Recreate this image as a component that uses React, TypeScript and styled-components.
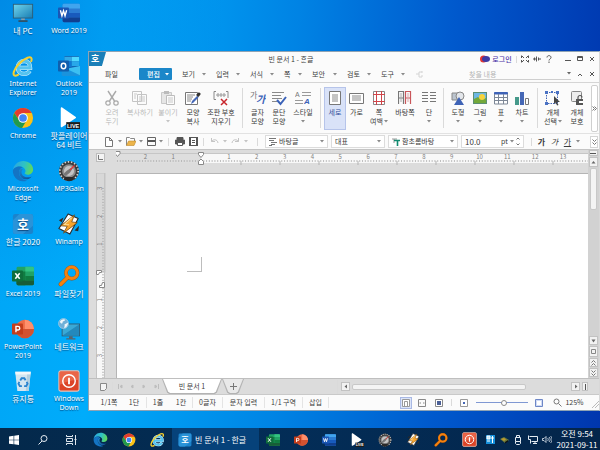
import React from "react";
import styled, { createGlobalStyle, css } from "styled-components";

const GlobalStyle = createGlobalStyle`
  * { box-sizing: border-box; }
  body { margin: 0; font-family: "Noto Sans CJK KR", "Noto Sans", sans-serif; font-size: 7px; color: #3c3c3c; }
  button, input, select { font: inherit; color: inherit; margin: 0; padding: 0; border: 0; background: none; border-radius: 0; outline: 0; }
  svg { display: block; flex: none; }
`;

/* ---------- application icons (24 x 24 grid) ---------- */

type IconProps = { size?: number };
const Art = ({ size = 22, children }: IconProps & { children: React.ReactNode }) => (
  <svg width={size} height={size} viewBox="0 0 24 24" fill="none" aria-hidden="true">{children}</svg>
);

const PcIcon = (p: IconProps) => (
  <Art {...p}>
    <defs><linearGradient id="pc" x1="0" y1="0" x2="1" y2="1"><stop stopColor="#6fd3ec" /><stop offset="1" stopColor="#1a7fb4" /></linearGradient></defs>
    <rect x="1" y="2" width="22" height="16" fill="#2b5d78" /><rect x="2" y="3" width="20" height="14" fill="url(#pc)" />
    <path d="M10 18h4v2h-4z" fill="#8a9ba6" /><path d="M7 20h10v1.6H7z" fill="#39444c" />
  </Art>
);
const NetworkIcon = (p: IconProps) => (
  <Art {...p}>
    <rect x="4" y="6" width="20" height="14" fill="#2b5d78" /><rect x="5" y="7" width="18" height="12" fill="#3aa9d6" />
    <path d="M5 19L23 7v12z" fill="#2389bc" />
    <path d="M12 20h4v2h-4zM9 22h10v1.5H9z" fill="#56646e" />
    <circle cx="6" cy="6" r="5.6" fill="#6fb0d8" /><path d="M2 4c2-3 5-3 6-2-1 2-3 1-3 3S3 6 2 4zM7 7l4-2c0 3-2 6-4 6-1-1 1-2 0-4z" fill="#eff8fc" />
    <circle cx="6" cy="6" r="5.4" stroke="#a8d2ea" strokeWidth=".7" />
  </Art>
);
const WordIcon = (p: IconProps) => (
  <Art {...p}>
    <rect x="5" y="2" width="19" height="20" rx="1.5" fill="#2b7cd3" /><path d="M6.500 2h16A1.500 1.500 0 0 1 24 3.500V7H5V3.500A1.500 1.500 0 0 1 6.500 2z" fill="#41a5ee" />
    <path d="M5 12h19v5H5z" fill="#185abd" /><path d="M5 17h19v3.500a1.500 1.500 0 0 1-1.500 1.500h-16A1.500 1.500 0 0 1 5 20.500z" fill="#103f91" />
    <rect x="0" y="6" width="12" height="12" rx="1" fill="#1a56b5" /><path d="M2.600 9l1.700 6 1.700-5.500L7.700 15l1.700-6" stroke="#fff" strokeWidth="1.500" />
  </Art>
);
const OutlookIcon = (p: IconProps) => (
  <Art {...p}>
    <rect x="7" y="1" width="16" height="15" rx="1" fill="#1066b5" /><path d="M7 2h8v5H7z" fill="#32a9e7" /><path d="M15 2h8v5h-8z" fill="#50d9ff" /><path d="M7 7h8v6H7z" fill="#0f78d4" /><path d="M15 7h8v5h-8z" fill="#28a8ea" />
    <path d="M4 12l10 6 10-6v9.500a1.500 1.500 0 0 1-1.500 1.500h-17A1.500 1.500 0 0 1 4 21.500z" fill="#1a93dd" /><path d="M24 12v10L9 15z" fill="#3cc0f2" />
    <rect x="0" y="6" width="12" height="12" rx="1" fill="#0f5fae" /><ellipse cx="6" cy="12" rx="2.500" ry="3" stroke="#fff" strokeWidth="1.600" />
  </Art>
);
const ExcelIcon = (p: IconProps) => (
  <Art {...p}>
    <rect x="5" y="2" width="19" height="20" rx="1.500" fill="#21a366" /><path d="M14.500 2h8A1.500 1.500 0 0 1 24 3.500V7h-9.500z" fill="#33c481" /><path d="M5 7h9.500v5H5zM5 12h9.500v10h-8A1.500 1.500 0 0 1 5 20.500z" fill="#107c41" /><path d="M14.500 12H24v5h-9.500z" fill="#107c41" /><path d="M5 17h19v3.500a1.500 1.500 0 0 1-1.500 1.500h-16A1.500 1.500 0 0 1 5 20.500z" fill="#185c37" />
    <rect x="0" y="6" width="12" height="12" rx="1" fill="#0f6e3b" /><path d="M3.600 9l4.800 6M8.400 9l-4.800 6" stroke="#fff" strokeWidth="1.700" />
  </Art>
);
const PowerPointIcon = (p: IconProps) => (
  <Art {...p}>
    <circle cx="14" cy="12" r="10" fill="#ed6c47" /><path d="M14 2a10 10 0 0 1 10 10H14z" fill="#ff8f6b" /><path d="M4 12h20a10 10 0 0 1-20 0z" fill="#d35230" />
    <rect x="0" y="6" width="12" height="12" rx="1" fill="#c43e1c" /><path d="M4.300 15.500V9.200h2.200a1.900 1.900 0 0 1 0 3.900H4.300" stroke="#fff" strokeWidth="1.500" />
  </Art>
);
const IeIcon = (p: IconProps) => (
  <Art {...p}>
    <path d="M7 14h12.800c.2-4.600-2.600-7.300-6.500-7.300-4 0-7 2.900-7 7s2.900 6.900 7 6.900c2.600 0 4.700-1.100 6-3.300" stroke="#d4f2fd" strokeWidth="4.600" />
    <path d="M7 14h12.800c.2-4.600-2.600-7.300-6.500-7.300-4 0-7 2.900-7 7s2.900 6.900 7 6.900c2.600 0 4.700-1.100 6-3.300" stroke="#55c3ef" strokeWidth="3.400" />
    <path d="M21 6.800c1.200-3.600-.4-5.100-4-3.800C10.500 5.400 3.500 13 1.900 18.700c-.9 3.600 1 4.900 4.600 3" stroke="#f6cf2f" strokeWidth="2.200" strokeLinecap="round" />
  </Art>
);
const ChromeIcon = (p: IconProps) => (
  <Art {...p}>
    <circle cx="12" cy="12" r="11" fill="#fbc116" />
    <path d="M2.500 6.500A11 11 0 0 1 21.500 6.500H12L8 14.500z" fill="#e33b2e" />
    <path d="M2.500 6.500A11 11 0 0 0 11 23l5-8.500-8 .2z" fill="#219a4d" />
    <circle cx="12" cy="12" r="5.300" fill="#fff" /><circle cx="12" cy="12" r="4.200" fill="#4285f4" />
  </Art>
);
const EdgeIcon = (p: IconProps) => (
  <Art {...p}>
    <defs>
      <linearGradient id="edgeTop" x1="0" y1=".3" x2="1" y2=".5"><stop stopColor="#2ba5e3" /><stop offset=".55" stopColor="#2fc3c3" /><stop offset="1" stopColor="#62d957" /></linearGradient>
      <linearGradient id="edgeLow" x1="0" y1="0" x2="1" y2="1"><stop stopColor="#1b8ad6" /><stop offset="1" stopColor="#114a8b" /></linearGradient>
    </defs>
    <path d="M1 11.500C1.500 5.500 6.300 1 12.200 1 18.500 1 23 5.300 23 10.300c0 3.500-2.700 5.700-5.700 5.700-2.500 0-3.900-.8-3.600-1.700.9-1 1.200-2 .9-3.200-.7-2.500-3.300-4-6.100-4-4 0-7 2-7.500 4.400z" fill="url(#edgeTop)" />
    <path d="M1 11.500C1.500 9 4.500 7.100 8.500 7.100c1.200 0 2.300.3 3.300.8-3 .9-4.500 3.600-4.100 6.700.5 4.300 4.400 7.300 8.800 7.700A11 11 0 0 1 1 11.500z" fill="#1474c4" />
    <path d="M9.500 9.300c-2.600 2.300-2.300 6.600.4 9.400 3.500 3.500 8.600 3 11.600-.8-3.500 1.900-9.500 1.200-10.900-3-.5-1.700-.2-3.700 1.200-4.900z" fill="url(#edgeLow)" />
  </Art>
);
const HwpIcon = (p: IconProps) => (
  <Art {...p}>
    <rect x="1" y="1" width="22" height="22" rx="2.500" fill="#1b83cc" /><path d="M1 8L8 1h12.500A2.500 2.500 0 0 1 23 3.500V14L12 23H3.500A2.500 2.500 0 0 1 1 20.500z" fill="#2a93d8" />
    <text x="12" y="17" textAnchor="middle" fontSize="14" fontWeight="700" fill="#fff">호</text>
  </Art>
);
const PotPlayerIcon = (p: IconProps) => (
  <Art {...p}>
    <path d="M3 1.500c0-1 .8-1.400 1.600-.9l14.500 9.900c.8.500.8 1.300 0 1.800L4.600 21.800c-.8.500-1.600 0-1.600-.9z" fill="#fff" />
    <rect x="9" y="16.500" width="15" height="7.500" fill="#1c1c1c" />
    <text x="16.500" y="22.400" textAnchor="middle" fontFamily="Liberation Sans, sans-serif" fontSize="6" fontWeight="700" fill="#fff">LIVE</text>
  </Art>
);
const Mp3GainIcon = (p: IconProps) => (
  <Art {...p}>
    <circle cx="12" cy="12" r="11" fill="#3b3b3b" /><circle cx="12" cy="12" r="10" stroke="#d6d6d6" strokeWidth="1.800" strokeDasharray="1.500 2" />
    <circle cx="12" cy="12" r="7.500" fill="#8d8d8d" /><circle cx="12" cy="12" r="5.500" fill="#c4c4c4" /><path d="M6 15.500c3-4 5-5 11-8.500-3 6-5 8.500-9 10z" fill="#777" /><path d="M13 11l5-5" stroke="#e33" strokeWidth="1.300" />
    <path d="M6 21a10 10 0 0 0 12 0l-2-2.500H8z" fill="#2a2a2a" />
  </Art>
);
const WinampIcon = (p: IconProps) => (
  <Art {...p}>
    <path d="M11 1l11 5-9 17-12-6z" fill="#fff" stroke="#2a2a2a" strokeWidth="1.200" strokeLinejoin="round" />
    <path d="M1 8l5-3-2 5zM18 19l5-5-1 6z" fill="#2a2a2a" />
    <path d="M18 2L3 14l7 .5L6 22l15-11.500-6-.8z" fill="#f7a32b" stroke="#6b430e" strokeWidth=".8" strokeLinejoin="round" />
    <path d="M15 5L7 12.500l5 .3" stroke="#ffe09a" strokeWidth="1.200" />
  </Art>
);
const FinderIcon = (p: IconProps) => (
  <Art {...p}>
    <circle cx="15" cy="8.500" r="6.300" stroke="#a34d06" strokeWidth="4" /><path d="M10.500 13.500L3 21" stroke="#a34d06" strokeWidth="4.600" strokeLinecap="round" />
    <circle cx="15" cy="8.500" r="6.300" stroke="#f5820f" strokeWidth="3.200" /><path d="M10.500 13.500L3 21" stroke="#f5820f" strokeWidth="3.600" strokeLinecap="round" />
  </Art>
);
const RecycleIcon = (p: IconProps) => (
  <Art {...p}>
    <path d="M3.500 2h17l-2.300 21H5.800z" fill="#d3e6f1" /><path d="M3.500 2h17l-.4 3H3.900z" fill="#f1f7fa" /><path d="M16.500 5h3.600l-1.900 18H15z" fill="#b5d0e0" />
    <path d="M9 11.500l1.500-2.500h3l1.300 2.200M16 13l1 2-1.500 2.500h-2.300M10.800 17.500H8.500L7 15l1-2" stroke="#2b84cf" strokeWidth="2" />
  </Art>
);
const PowerIcon = (p: IconProps) => (
  <Art {...p}>
    <rect x="1" y="1" width="22" height="22" rx="2" fill="#dc4427" stroke="#eec0b2" strokeWidth="1.200" />
    <path d="M2 2h20v9C15 11 8 13 2 16z" fill="#e96548" /><circle cx="12" cy="12" r="6.800" stroke="#fff" strokeWidth="1.600" /><path d="M12 8.500v7" stroke="#fff" strokeWidth="2" />
  </Art>
);

/* ---------- small drawings ---------- */

const Line = ({ w, h, d, color = "#555", sw = 1, fill = "none" }: { w: number; h: number; d: string; color?: string; sw?: number; fill?: string }) => (
  <svg width={w} height={h} viewBox={`0 0 ${w} ${h}`} fill={fill} stroke={color} strokeWidth={sw} aria-hidden="true"><path d={d} /></svg>
);
const Caret = ({ color = "#8a8a8a" }: { color?: string }) => (
  <svg width="4" height="3" viewBox="0 0 4 3" aria-hidden="true"><path d="M0 0h4L2 2.500z" fill={color} /></svg>
);

/* ---------- desktop ---------- */

const Desktop = styled.div`
  height: 100vh;
  display: flex;
  flex-direction: column;
  background:
    radial-gradient(ellipse 50% 90% at 0 0, rgba(0, 112, 214, 0.5), transparent 75%),
    linear-gradient(93deg, #00a6f6 0, #00acfb 17%, #0083e4 48%, #0059cd 73%, #0036ae 100%);
`;
const Workspace = styled.main`
  flex: 1;
  min-height: 0;
  display: flex;
`;
const Shortcuts = styled.nav`
  width: 88px;
  padding: 2px 0 5px;
  display: grid;
  grid-template-columns: 46px 46px;
  grid-template-rows: repeat(8, 1fr);
  grid-auto-flow: column;
  flex: none;
`;
const Shortcut = styled.button<{ $latin: boolean }>`
  display: flex;
  flex-direction: column;
  align-items: center;
  justify-content: flex-start;
  gap: 2px;
  min-height: 0;
  color: #fff;
  font-family: ${(p) => (p.$latin ? '"Noto Sans", sans-serif' : '"Noto Sans CJK KR", sans-serif')};
  font-size: ${(p) => (p.$latin ? 7 : 8)}px;
  line-height: 9px;
  text-align: center;
  white-space: pre;
  text-shadow: 0 1px 1px rgba(0, 40, 90, 0.7);
`;

const shortcuts: [string, React.ComponentType<IconProps>][] = [
  ["내 PC", PcIcon], ["Internet\nExplorer", IeIcon], ["Chrome", ChromeIcon], ["Microsoft\nEdge", EdgeIcon],
  ["한글 2020", HwpIcon], ["Excel 2019", ExcelIcon], ["PowerPoint\n2019", PowerPointIcon], ["휴지통", RecycleIcon],
  ["Word 2019", WordIcon], ["Outlook\n2019", OutlookIcon], ["팟플레이어\n64 비트", PotPlayerIcon], ["MP3Gain", Mp3GainIcon],
  ["Winamp", WinampIcon], ["파일찾기", FinderIcon], ["네트워크", NetworkIcon], ["Windows\nDown", PowerIcon],
];

/* ---------- window frame ---------- */

const Window = styled.section`
  flex: 1;
  min-width: 0;
  margin: 51px 0 17px;
  display: flex;
  flex-direction: column;
  background: #fbfbfb;
  border: 1px solid #8fa3b4;
  border-right-color: #d8d8d8;
`;
const TitleBar = styled.header`
  height: 14px;
  flex: none;
  display: grid;
  grid-template-columns: 120px 1fr 120px;
  align-items: center;
`;
const Badge = styled.div`
  width: 17px;
  height: 14px;
  padding-left: 2px;
  background: #1b7fb8;
  clip-path: polygon(0 0, 100% 0, 76% 100%, 0 100%);
  color: #fff;
  font-size: 9px;
  font-weight: 700;
  line-height: 13px;
`;
const Title = styled.h1`
  margin: 0;
  padding-right: 106px;
  font-size: 7px;
  font-weight: 400;
  text-align: center;
  line-height: 14px;
  white-space: nowrap;
`;
const WindowTools = styled.div`
  display: flex;
  align-items: center;
  justify-content: flex-end;
  padding-right: 1px;
`;
const Tool = styled.button<{ $w?: number }>`
  width: ${(p) => p.$w ?? 12}px;
  height: 12px;
  flex: none;
  display: flex;
  align-items: center;
  justify-content: center;
  gap: 2px;
  line-height: 12px;
  white-space: nowrap;
`;
const Login = styled(Tool)`
  gap: 2px;
  color: #4d35a8;
  font-weight: 500;
`;

const MenuBar = styled.nav`
  height: 17px;
  flex: none;
  display: flex;
  align-items: center;
  padding: 0 1px 0 10px;
  border-bottom: 1px solid #d5d5d5;
`;
const MenuItem = styled.button<{ $w: number; $active?: boolean }>`
  width: ${(p) => p.$w}px;
  height: 12px;
  flex: none;
  display: flex;
  align-items: center;
  justify-content: space-between;
  padding: 0 4px 0 6px;
  line-height: 12px;
  white-space: nowrap;
  ${(p) => p.$active && css`background: #1b87c9; color: #fff; font-weight: 500; border-radius: 1px; padding: 0 3px 0 8px;`}
`;
const SearchBox = styled.div`
  width: 102px;
  height: 12px;
  margin: 0 3px 0 auto;
  display: flex;
  align-items: center;
  border-bottom: 1px solid #cfcfcf;
  input { flex: 1; min-width: 0; height: 10px; line-height: 10px; }
  input::placeholder { color: #b4b4b4; opacity: 1; }
`;

/* ---------- ribbon ---------- */

const Ribbon = styled.div`
  height: 51px;
  flex: none;
  display: flex;
  align-items: center;
  padding: 0 1px 0 9px;
  border-bottom: 1px solid #e2e2e2;
`;
const RibbonButton = styled.button<{ $w: number; $on?: boolean; $off?: boolean }>`
  width: ${(p) => p.$w}px;
  height: 43px;
  flex: none;
  display: flex;
  flex-direction: column;
  align-items: center;
  padding-top: 2px;
  gap: 2px;
  line-height: 9px;
  white-space: pre;
  border: 1px solid ${(p) => (p.$on ? "#b6c4ea" : "transparent")};
  background: ${(p) => (p.$on ? "#d9e2f8" : "none")};
  color: ${(p) => (p.$off ? "#b9b9b9" : p.$on ? "#33519c" : "#3c3c3c")};
`;
const RibbonLabel = styled.span`
  display: flex;
  flex-direction: column;
  align-items: center;
`;
const CaretRow = styled.span`
  height: 9px;
  display: flex;
  align-items: center;
  gap: 1px;
`;
const Divider = styled.i<{ $w?: number; $h?: number }>`
  width: ${(p) => p.$w ?? 8}px;
  height: ${(p) => p.$h ?? 40}px;
  flex: none;
  background: linear-gradient(#dadada, #dadada) center / 1px 100% no-repeat;
`;
const MoreButton = styled.button`
  width: 7px;
  height: 47px;
  margin-left: auto;
  display: flex;
  align-items: center;
  justify-content: center;
  border: 1px solid #cfcfcf;
  border-radius: 2px;
  background: #fff;
`;

const G = ({ children, w = 16 }: { children: React.ReactNode; w?: number }) => (
  <svg width={w} height="16" viewBox={`0 0 ${w} 16`} fill="none" aria-hidden="true">{children}</svg>
);

type RibbonItem = { w: number; label?: string; second?: string; caret?: boolean; on?: boolean; off?: boolean; icon?: React.ReactNode };
const ribbon: RibbonItem[] = [
  { w: 28, label: "오려\n두기", off: true, icon: <G><path d="M4 1l6.500 10M12 1L5.500 11" stroke="#a9a9a9" strokeWidth="1.400" /><circle cx="4" cy="13" r="2.200" stroke="#a9a9a9" strokeWidth="1.200" /><circle cx="12" cy="13" r="2.200" stroke="#a9a9a9" strokeWidth="1.200" /></G> },
  { w: 28, label: "복사하기", off: true, icon: <G><path d="M.5 1.500h9v10h-9zM5.500 4.500h9v10h-9z" fill="#fbfbfb" stroke="#c4c4c4" /><path d="M7 7h6M7 9h6M7 11h6M2 4h3M2 6h2M2 8h2" stroke="#c9c9c9" /></G> },
  { w: 28, label: "붙이기", caret: true, off: true, icon: <G><path d="M1.500 2.500h10v11h-10z" fill="#e6e6e6" stroke="#c9c9c9" /><path d="M4 1h5v3H4z" fill="#bbb" /><path d="M6.500 5.500h8v9h-8z" fill="#fbfbfb" stroke="#bdbdbd" /><path d="M8 8h5M8 10h5M8 12h5" stroke="#c9c9c9" /></G> },
  { w: 22, label: "모양\n복사", icon: <G><path d="M.5 2.500h12v12H.5z" fill="#fff" stroke="#777" /><path d="M2 5h8M2 7h6M2 9h5M2 11h4" stroke="#8a8a8a" /><path d="M6 14l1-3 5-5 1.500 1.500-5 5z" fill="#4568b8" /><path d="M11 5l2-2c1-1 3 0 2.500 1.500l-2 2.500z" fill="#333" /></G> },
  { w: 34, label: "조판 부호\n지우기", icon: <G w={18}><path d="M4 1.500H2v8h2M14 1.500h2V8" stroke="#8a8a8a" /><path d="M4 5h10M6 3v4M9 3v4M12 3v4" stroke="#9a9a9a" /><path d="M9 9l6 6M15 9l-6 6" stroke="#c8262c" strokeWidth="1.500" /></G> },
  { w: 9 },
  { w: 21, label: "글자\n모양", icon: <G><text x="0" y="8" fontSize="8" fill="#777">가</text><text x="6" y="13" fontSize="10" fontStyle="italic" fontWeight="700" fill="#3a62b8">가</text></G> },
  { w: 22, label: "문단\n모양", icon: <G><path d="M1 2.500h12M1 5.500h9M1 8.500h10M1 11.500h5" stroke="#8a8a8a" strokeWidth="1.200" /><path d="M6 10l3.500 4L15 7" stroke="#3a62b8" strokeWidth="2" /></G> },
  { w: 26, label: "스타일", caret: true, icon: <G><text x="0" y="7" fontFamily="Liberation Sans, sans-serif" fontSize="7" fill="#777">A</text><path d="M7 2.500h9M7 5.500h9M0 10.500h8M0 13.500h8" stroke="#9a9a9a" /><text x="9" y="14" fontFamily="Liberation Sans, sans-serif" fontSize="8" fontWeight="700" fontStyle="italic" fill="#3a62b8">A</text></G> },
  { w: 8 },
  { w: 22, label: "세로", on: true, icon: <G w={12}><path d="M.5 1.500h11v13H.5z" fill="#fff" stroke="#777" /><path d="M3 5h6M3 7h6M3 9h6M3 11h6" stroke="#8a8a8a" /></G> },
  { w: 21, label: "가로", icon: <G><path d="M.5 3.500h14v10H.5z" fill="#fff" stroke="#777" /><path d="M3 6h9M3 8h9M3 10h9" stroke="#8a8a8a" /></G> },
  { w: 24, label: "쪽", second: "여백", icon: <G w={14}><path d="M1.500 1.500h11v13h-11z" fill="#fff" stroke="#888" /><path d="M4.500 1v14M9.500 1v14M1 4.500h12M1 11.500h12" stroke="#d0454a" /></G> },
  { w: 28, label: "바탕쪽", icon: <G w={14}><path d="M.5 14V1.500h5V14M.5 8h5" stroke="#777" strokeWidth="1.200" /><path d="M7.500 14V1.500h5V14M7.500 8h5" stroke="#c9565a" strokeWidth="1.200" /><path d="M3 3v9" stroke="#aaa" /><path d="M10 3v9" stroke="#d9a5a7" /></G> },
  { w: 20, label: "단", caret: true, icon: <G w={14}><path d="M0 2.500h6M0 5.500h6M0 8.500h6M0 11.500h6M8 2.500h6M8 5.500h6M8 8.500h6M8 11.500h6" stroke="#777" strokeWidth="1.200" /></G> },
  { w: 8 },
  { w: 22, label: "도형", caret: true, icon: <G w={14}><path d="M1 3h7v7H1z" fill="#bcc5cf" stroke="#888" /><circle cx="9" cy="6" r="4" fill="#e3e6ea" stroke="#888" /><path d="M3 15l5-8 5 8z" fill="#3f63b6" /></G> },
  { w: 22, label: "그림", caret: true, icon: <G w={14}><path d="M0 2h14v12H0z" fill="#5c8f74" /><path d="M1 3h12v6H1z" fill="#6db7e4" /><path d="M1 13V9l4-2 4 3 4-2v5z" fill="#72a83a" /><circle cx="9" cy="7" r="3" fill="#f6d43c" /></G> },
  { w: 20, label: "표", caret: true, icon: <G w={14}><path d="M1 2h12v12H1z" fill="#fff" /><path d="M.5 4V2.500h13V4z" fill="#3f63b6" stroke="#3f63b6" /><path d="M.5 4v10h13V4M.5 7.500h13M.5 10.500h13M4.500 4v10M9.500 4v10" stroke="#7d8796" /></G> },
  { w: 22, label: "차트", caret: true, icon: <G w={14}><path d="M0 7h4v8H0z" fill="#45998a" /><path d="M5 2h4v13H5z" fill="#4567b5" /><path d="M10.500 8.500h3v6h-3z" fill="#fff" stroke="#777" /></G> },
  { w: 8 },
  { w: 24, label: "개체", second: "선택", icon: <G><path d="M1.500 2.500h11v11h-11z" stroke="#3f63b6" strokeDasharray="1.500 1" /><path d="M0 1h3v3H0zM11 1h3v3h-3zM0 12h3v3H0zM6 1h2v2H6z" fill="#4a72c4" /><path d="M9 6l6 6h-3l1.500 3-1.500.5-1.200-3L9 14z" fill="#444" /></G> },
  { w: 24, label: "개체\n보호", icon: <G w={14}><rect x="1.500" y="1.500" width="10" height="10" rx="1" fill="#eee" stroke="#888" /><path d="M6 9h7v6H6z" fill="#555" /><path d="M8 9V7.500a2 2 0 0 1 4 0" stroke="#555" strokeWidth="1.200" /><path d="M9 11h4v2H9z" fill="#fff" /></G> },
];

const RibbonEntry = ({ item }: { item: RibbonItem }) => {
  if (!item.label) return <Divider $w={item.w} />;
  return (
    <RibbonButton $w={item.w} $on={item.on} $off={item.off}>
      {item.icon}
      <RibbonLabel>
        <span>{item.label}</span>
        {item.second && <CaretRow>{item.second}<Caret /></CaretRow>}
        {item.caret && <CaretRow><Caret color={item.off ? "#c4c4c4" : "#8a8a8a"} /></CaretRow>}
      </RibbonLabel>
    </RibbonButton>
  );
};

/* ---------- format bar ---------- */

const FormatBar = styled.div`
  height: 15px;
  flex: none;
  display: flex;
  align-items: center;
  padding: 0 1px 0 14px;
`;
const Field = styled.div<{ $w: number }>`
  width: ${(p) => p.$w}px;
  height: 13px;
  flex: none;
  margin-right: 3px;
  padding: 0 3px;
  display: flex;
  align-items: center;
  gap: 2px;
  border: 1px solid #dcdcdc;
  background: #fff;
  select { appearance: none; flex: 1; min-width: 0; height: 11px; line-height: 11px; }
  input { width: 34px; height: 11px; font-size: 8px; line-height: 11px; }
`;
const LetterButton = styled(Tool)<{ $italic?: boolean; $line?: boolean; $bold?: boolean }>`
  font-size: 8px;
  font-weight: ${(p) => (p.$bold ? 700 : 400)};
  font-style: ${(p) => (p.$italic ? "italic" : "normal")};
  text-decoration: ${(p) => (p.$line ? "underline" : "none")};
`;
const Spacer = styled.i`flex: 1;`;
const EdgeButton = styled(Tool)`
  border: 1px solid #d5d5d5;
  background: #fff;
`;

/* ---------- document area ---------- */

const Canvas = styled.div`
  flex: 1;
  min-height: 0;
  display: grid;
  grid-template-columns: 27px minmax(0, 1fr) 11px;
  grid-template-rows: 23px minmax(0, 1fr);
  background: #dcdcdc;
  border-top: 1px solid #c4c4c4;
`;
const RulerCorner = styled.button`
  width: 9px;
  height: 9px;
  margin: 3px 0 0 7px;
  border: 1px solid #bdbdbd;
  background: #f4f4f4;
  display: flex;
  align-items: center;
  justify-content: center;
`;
const TopRuler = styled.div`
  padding-top: 1px;
  overflow: hidden;
`;
const SideRuler = styled.div`
  padding-left: 7px;
  overflow: hidden;
`;
const Sheet = styled.article`
  padding: 83px 0 0 70px;
  border: 1px solid #b5b5b5;
  border-width: 1px 0 0 1px;
  background: #fff;
`;
const MarginMark = styled.i`
  display: block;
  width: 15px;
  height: 15px;
  border: 1px solid #bdbdbd;
  border-width: 0 1px 1px 0;
`;
const ScrollColumn = styled.div`
  grid-column: 3;
  grid-row: 1 / span 2;
  display: flex;
  flex-direction: column;
  align-items: center;
  gap: 1px;
  padding: 0 1px 1px 0;
  background: #d2d2d2;
`;
const ScrollButton = styled.button<{ $h?: number; $w?: number }>`
  width: ${(p) => p.$w ?? 9}px;
  height: ${(p) => p.$h ?? 9}px;
  flex: none;
  display: flex;
  align-items: center;
  justify-content: center;
  border: 1px solid #c2c2c2;
  background: #f2f2f2;
`;
const Thumb = styled.div<{ $w?: string; $h?: string }>`
  width: ${(p) => p.$w ?? "7px"};
  height: ${(p) => p.$h ?? "7px"};
  border-radius: 2px;
  border: 1px solid #c8c8c8;
  background: #f4f4f4;
`;

const UNIT = 27.85;
const ORIGIN = 85;
const range = (from: number, to: number) => Array.from({ length: to - from + 1 }, (_, i) => i + from);

const HorizontalRuler = () => (
  <svg width="100%" height="16" aria-label="가로 눈금자">
    <rect x="0" y="2" width={ORIGIN} height="10" fill="#dedede" />
    <rect x={ORIGIN} y="2" width="3000" height="10" fill="#f8f8f8" />
    <path d="M0 2.500h3000" stroke="#c6c6c6" />
    <path d={range(-30, 640).map((m) => `M${ORIGIN + (m * UNIT) / 10} 9v2`).join("")} stroke="#b0b0b0" strokeWidth=".8" />
    {range(-2, 13).map((m) => m !== 0 && <text key={m} x={ORIGIN + m * UNIT} y="8" fontSize="6" fill="#808080" textAnchor="middle">{Math.abs(m)}</text>)}
    <path d={range(0, 60).map((m) => `M${ORIGIN + 40 + m * 39} 10v4`).join("")} stroke="#b3b3b3" />
    <path d="M-1 .5h5v2l-2.500 3-2.500-3z" fill="#fff" stroke="#888" />
    <path d="M82.500 1.500h5v2L85 6.500l-2.500-3zM82.500 13.500h5v-3L85 8l-2.500 2.500z" fill="#fff" stroke="#888" />
  </svg>
);
const VerticalRuler = () => {
  const zero = 99;
  return (
    <svg width="13" height="100%" aria-label="세로 눈금자">
      <rect x="0" y="0" width="9" height={zero} fill="#d8d8d8" stroke="#c4c4c4" />
      <rect x="0" y={zero} width="9" height="3000" fill="#f8f8f8" />
      <path d="M.5 0v3000M8.500 0v3000" stroke="#c4c4c4" />
      <path d={range(-30, 400).map((m) => `M6 ${zero + (m * UNIT) / 10}h2`).join("")} stroke="#b0b0b0" strokeWidth=".8" />
      {range(-3, 3).map((m) => m !== 0 && <text key={m} x="0" y="0" fontSize="6" fill="#808080" textAnchor="middle" transform={`translate(6 ${zero + m * UNIT}) rotate(-90)`}>{Math.abs(m)}</text>)}
      <path d="M.5 97.500h5v2h-2l-1 2h-2z" fill="#fff" stroke="#888" />
      <path d="M8.500 109.500v5h-5v-2h2l1-3z" fill="#fff" stroke="#888" />
    </svg>
  );
};

/* ---------- tabs and status ---------- */

const TabStrip = styled.div`
  height: 17px;
  flex: none;
  display: flex;
  align-items: center;
  padding: 0 11px 0 8px;
  background: #dcdcdc;
  border-top: 1px solid #bfbfbf;
  border-bottom: 1px solid #c9c9c9;
`;
const TabShape = styled.div`
  height: 15px;
  flex: none;
  align-self: flex-start;
  background: #b3b3b3;
  clip-path: polygon(0 0, 100% 0, calc(100% - 5px) 88%, calc(100% - 7px) 100%, 7px 100%, 5px 88%);
  padding: 0 1px 1px;
`;
const TabButton = styled.button<{ $w: number; $bg: string }>`
  width: ${(p) => p.$w}px;
  height: 14px;
  line-height: 14px;
  background: ${(p) => p.$bg};
  clip-path: polygon(0 0, 100% 0, calc(100% - 5px) 88%, calc(100% - 7px) 100%, 7px 100%, 5px 88%);
  display: flex;
  align-items: center;
  justify-content: center;
`;
const ScrollRow = styled.div`
  flex: 0 1 252px;
  margin-left: auto;
  display: flex;
  align-items: center;
  gap: 2px;
`;
const StatusBar = styled.footer`
  height: 15px;
  flex: none;
  display: flex;
  align-items: center;
  padding: 0 0 0 8px;
`;
const StatusItem = styled.span<{ $w: number; $line?: boolean }>`
  width: ${(p) => p.$w}px;
  flex: none;
  height: 11px;
  line-height: 11px;
  text-align: center;
  white-space: nowrap;
  border-right: 1px solid ${(p) => (p.$line === false ? "transparent" : "#e4e4e4")};
`;
const ViewButton = styled(Tool)<{ $on?: boolean }>`
  border: 1px solid ${(p) => (p.$on ? "#a9b9e4" : "transparent")};
  background: ${(p) => (p.$on ? "#dbe4f9" : "none")};
`;
const ZoomSlider = styled.input`
  appearance: none;
  width: 52px;
  height: 10px;
  flex: none;
  background: linear-gradient(#7f98d3, #7f98d3) center / 100% 1px no-repeat;
  &::-webkit-slider-thumb { appearance: none; width: 6px; height: 6px; border-radius: 50%; border: 1px solid #888; background: #fff; }
`;

/* ---------- taskbar ---------- */

const Taskbar = styled.footer`
  height: 22px;
  flex: none;
  display: flex;
  align-items: stretch;
  background: linear-gradient(90deg, #04294b, #032d57 50%, #04254a);
  color: #fff;
`;
const Pins = styled.div<{ $w: number; $n: number }>`
  width: ${(p) => p.$w}px;
  flex: none;
  display: grid;
  grid-template-columns: repeat(${(p) => p.$n}, 1fr);
`;
const Pin = styled.button`
  display: flex;
  align-items: center;
  justify-content: center;
  min-width: 0;
  padding-top: 1px;
`;
const RunningApp = styled.button`
  width: 87px;
  flex: none;
  display: flex;
  align-items: center;
  gap: 3px;
  padding: 1px 0 0 6px;
  background: #06427a;
  font-size: 8px;
  line-height: 12px;
  white-space: nowrap;
`;
const Clock = styled.time`
  width: 46px;
  margin-left: auto;
  font-size: 8px;
  line-height: 11px;
  text-align: center;
  white-space: nowrap;
`;

const menus: [string, number][] = [["보기", 34], ["입력", 34], ["서식", 34], ["쪽", 28], ["보안", 35], ["검토", 34], ["도구", 34]];
const statuses: [string, number, boolean][] = [["1/1쪽", 25, false], ["1단", 25, true], ["1줄", 23, false], ["1칸", 23, true], ["0글자", 30, true], ["문자 입력", 42, true], ["1/1 구역", 38, true], ["삽입", 26, true]];

export default function App() {
  return (
    <Desktop>
      <GlobalStyle />
      <Workspace>
        <Shortcuts aria-label="바탕 화면">
          {shortcuts.map(([name, I]) => <Shortcut key={name} $latin={/^[\x00-\x7f]+$/.test(name)}><I />{name}</Shortcut>)}
        </Shortcuts>
        <Window>
          <TitleBar>
            <Badge>호</Badge>
            <Title>빈 문서 1 - ᄒᆞᆫ글</Title>
            <WindowTools>
              <Login $w={34}>
                <svg width="10" height="8" viewBox="0 0 10 8" aria-hidden="true"><circle cx="3.500" cy="4" r="3.500" fill="#e5352f" /><ellipse cx="6" cy="4" rx="4" ry="3" fill="#3d3aa5" /></svg>
                로그인
              </Login>
              <Divider $w={6} $h={7} />
              <Tool aria-label="전체 화면" $w={12}><Line w={8} h={8} d="M1 1l2 2M7 1L5 3M1 7l2-2M7 7L5 5M.5 3V.5M7.500 3V.5M.5 5v2.500M7.500 5v2.500" /></Tool>
              <Tool aria-label="창 맞춤" $w={12}><Line w={8} h={8} d="M0 4h3M5 4h3M3.500 1.500v5M5.500 2.500v3M1.500 2.500v3" /></Tool>
              <Tool aria-label="도움말" $w={12}><Line w={6} h={8} d="M1 2.500C1 0 5 0 5 2.500 5 4 3 4 3 5.500M3 6.500v1.500" /></Tool>
              <Spacer />
              <Tool aria-label="최소화"><Line w={6} h={6} d="M0 4.500h6" /></Tool>
              <Tool aria-label="최대화"><Line w={6} h={6} d="M.5 .5h5v4h-5zM.5 1.500h5" /></Tool>
              <Tool aria-label="닫기"><Line w={6} h={6} d="M1 1l4 4M5 1L1 5" /></Tool>
            </WindowTools>
          </TitleBar>
          <MenuBar>
            <MenuItem $w={40}>파일</MenuItem>
            <MenuItem $w={33} $active>편집<Caret color="#fff" /></MenuItem>
            <Divider $w={4} $h={0} />
            {menus.map(([name, w]) => <MenuItem key={name} $w={w}>{name}<Caret /></MenuItem>)}
            <Tool aria-label="도구 상태" $w={20}><Line w={9} h={8} d="M1 4h3V2h3M4 4v3h3M7 1v2M7 5v2" color="#d4d4d4" /></Tool>
            <SearchBox><input aria-label="찾을 내용" placeholder="찾을 내용" /><Caret color="#666" /></SearchBox>
            <Tool aria-label="리본 접기"><Line w={6} h={5} d="M1 4l2-2 2 2" /></Tool>
            <Tool aria-label="문서 닫기"><Line w={6} h={6} d="M1 1l4 4M5 1L1 5" /></Tool>
          </MenuBar>
          <Ribbon>
            {ribbon.map((item, i) => <RibbonEntry key={i} item={item} />)}
            <MoreButton aria-label="더 보기"><Line w={5} h={5} d="M.5 .5l2 2-2 2M2.500 .5l2 2-2 2" color="#777" /></MoreButton>
          </Ribbon>
          <FormatBar>
            <Tool aria-label="새 문서"><Line w={8} h={10} d="M.5 .5h4l3 3v6h-7zM4.500 .5v3h3" fill="#fff" color="#777" /></Tool>
            <Tool aria-label="새 문서 목록" $w={9}><Caret /></Tool>
            <Tool aria-label="열기" $w={14}><svg width="10" height="9" viewBox="0 0 10 9" aria-hidden="true"><path d="M.5 8.500v-8h3l1 1h4v3" fill="#fff" stroke="#888" /><path d="M.5 8.500l2-4.500H10L8 8.500z" fill="#edb54b" stroke="#c08a2a" strokeWidth=".6" /></svg></Tool>
            <Tool aria-label="열기 목록" $w={6}><Caret /></Tool>
            <Tool aria-label="저장" $w={14}><svg width="9" height="9" viewBox="0 0 9 9" aria-hidden="true"><path d="M.5 .5v8M8.500 .5v8M.5 .5h8M.5 8.500h8" stroke="#666" /><path d="M1 3h7v2H1z" fill="#555" /></svg></Tool>
            <Tool aria-label="저장 목록" $w={6}><Caret /></Tool>
            <Divider $w={9} $h={8} />
            <Tool aria-label="인쇄" $w={14}><svg width="10" height="9" viewBox="0 0 10 9" aria-hidden="true"><path d="M2 .5h6v2H2zM.5 3h9v4h-9z" fill="#555" stroke="#555" /><path d="M2.500 5.500h5v3h-5z" fill="#fff" stroke="#555" /></svg></Tool>
            <Tool aria-label="미리 보기" $w={12}><svg width="9" height="9" viewBox="0 0 9 9" aria-hidden="true"><path d="M0 0h9v9H0z" fill="#555" /><path d="M2 1h5v7H2z" fill="#fff" /><path d="M3 3.500h3M3 5.500h3" stroke="#555" /></svg></Tool>
            <Divider $w={8} $h={8} />
            <Tool aria-label="실행 취소" $w={14}><Line w={9} h={7} d="M1.500 0v3.500H5M1.500 3.500C3 1 7.500 1 8 5" color="#c4c4c4" /></Tool>
            <Tool aria-label="취소 목록" $w={7}><Caret color="#c4c4c4" /></Tool>
            <Tool aria-label="다시 실행" $w={15}><Line w={9} h={7} d="M7.500 0v3.500H4M7.500 3.500C6 1 1.500 1 1 5" color="#c4c4c4" /></Tool>
            <Tool aria-label="다시 목록" $w={6}><Caret color="#c4c4c4" /></Tool>
            <Divider $w={16} $h={8} />
            <Field $w={63}>
              <Line w={8} h={8} d="M0 .5h7M0 2.500h5M2 4.500h6M2 6.500h4M0 7.500h3" color="#777" />
              <select aria-label="스타일"><option>바탕글</option></select><Caret />
            </Field>
            <Field $w={54}><select aria-label="언어"><option>대표</option></select><Caret /></Field>
            <Field $w={70}>
              <svg width="8" height="8" viewBox="0 0 8 8" aria-hidden="true"><path d="M0 1h5M2 1v4" stroke="#999" /><path d="M2 2.500h6M5.500 2v6" stroke="#118a70" strokeWidth="1.600" /></svg>
              <select aria-label="글꼴"><option>함초롬바탕</option></select><Caret />
            </Field>
            <Field $w={63}>
              <input aria-label="글자 크기" defaultValue="10.0" />
              <select aria-label="단위"><option>pt</option></select><Caret />
              <Line w={4} h={9} d="M.5 2.500L2 1l1.500 1.500M.5 6.500L2 8l1.500-1.500" color="#777" />
            </Field>
            <Divider $w={8} $h={8} />
            <LetterButton $w={13} $bold>가</LetterButton>
            <LetterButton $w={13} $italic>가</LetterButton>
            <LetterButton $w={13} $line>가</LetterButton>
            <Tool aria-label="글자 속성 더 보기" $w={7}><Caret /></Tool>
            <Spacer />
            <EdgeButton aria-label="서식 더 보기" $w={8}><Line w={5} h={6} d="M.5 .5l2 2 2-2M.5 3.500l2 2 2-2" color="#777" /></EdgeButton>
          </FormatBar>
          <Canvas>
            <RulerCorner aria-label="탭 종류"><Line w={5} h={5} d="M.5 0v4.500H5" color="#777" /></RulerCorner>
            <TopRuler><HorizontalRuler /></TopRuler>
            <SideRuler><VerticalRuler /></SideRuler>
            <Sheet><MarginMark /></Sheet>
            <ScrollColumn>
              <ScrollButton aria-label="나누기" $h={6}><Line w={6} h={1} d="M0 .5h6" /></ScrollButton>
              <ScrollButton aria-label="위로" $h={10}><Line w={5} h={4} d="M.5 3.500L2.500 1l2 2.500z" fill="#666" sw={0} /></ScrollButton>
              <Thumb $h="42px" />
              <Spacer />
              <ScrollButton aria-label="아래로"><Line w={5} h={4} d="M.5 .5h4l-2 3z" fill="#666" sw={0} /></ScrollButton>
              <ScrollButton aria-label="쪽 선택" $h={11}><Line w={5} h={5} d="M.5 .5h4v4h-4z" color="#888" /></ScrollButton>
              <ScrollButton aria-label="이전 쪽"><Line w={5} h={6} d="M.5 2.500l2-2 2 2M.5 5.500l2-2 2 2" color="#777" /></ScrollButton>
              <ScrollButton aria-label="다음 쪽"><Line w={5} h={6} d="M.5 .5l2 2 2-2M.5 3.500l2 2 2-2" color="#777" /></ScrollButton>
            </ScrollColumn>
          </Canvas>
          <TabStrip>
            <Tool aria-label="문서 목록" $w={14}><Line w={8} h={8} d="M.5 .5h6v5l-2 2h-4z" fill="#f4f4f4" color="#888" /></Tool>
            <Divider $w={3} $h={9} />
            <Tool aria-label="처음"><Line w={5} h={5} d="M.5 0v5M4 1L2 2.500 4 4z" color="#bdbdbd" fill="#bdbdbd" /></Tool>
            <Tool aria-label="이전"><Line w={4} h={5} d="M3 1L1 2.500 3 4z" color="#bdbdbd" fill="#bdbdbd" /></Tool>
            <Tool aria-label="다음"><Line w={4} h={5} d="M1 1l2 1.500L1 4z" color="#bdbdbd" fill="#bdbdbd" /></Tool>
            <Tool aria-label="끝"><Line w={5} h={5} d="M4.500 0v5M1 1l2 1.500L1 4z" color="#bdbdbd" fill="#bdbdbd" /></Tool>
            <TabShape><TabButton $w={58} $bg="#fff">빈 문서 1</TabButton></TabShape>
            <TabShape><TabButton $w={20} $bg="#e9e9e9" aria-label="새 탭"><Line w={7} h={7} d="M3.500 0v7M0 3.500h7" color="#777" /></TabButton></TabShape>
            <ScrollRow>
              <Divider $w={3} $h={14} />
              <ScrollButton aria-label="왼쪽으로"><Line w={4} h={5} d="M3 .5L.5 2.500l2.500 2z" fill="#666" sw={0} /></ScrollButton>
              <Thumb $w="174px" $h="6px" />
              <Spacer />
              <ScrollButton aria-label="오른쪽으로"><Line w={4} h={5} d="M1 .5l2.500 2L1 4.500z" fill="#666" sw={0} /></ScrollButton>
              <ScrollButton aria-label="세로 나누기" $w={6}><Line w={1} h={6} d="M.5 0v6" /></ScrollButton>
            </ScrollRow>
          </TabStrip>
          <StatusBar>
            {statuses.map(([t, w, line]) => <StatusItem key={t} $w={w} $line={line}>{t}</StatusItem>)}
            <Spacer />
            <ViewButton $on aria-label="쪽 윤곽" $w={12}><Line w={8} h={8} d="M.5 .5h7v7h-7zM2.500 2.500v5M5.500 2.500v5M2.500 2.500h3" color="#999" fill="#fff" /></ViewButton>
            <ViewButton aria-label="폭 맞춤" $w={20}><Line w={8} h={8} d="M.5 .5h7v7h-7zM1.500 4h1.500M5 4h1.500" color="#888" /></ViewButton>
            <ViewButton aria-label="쪽 맞춤" $w={14}><svg width="8" height="8" viewBox="0 0 8 8" aria-hidden="true"><path d="M.5 .5h7v7h-7z" fill="#fff" stroke="#888" /><path d="M2 2h4v4H2z" fill="#4a5f96" /></svg></ViewButton>
            <Divider $w={11} $h={7} />
            <ViewButton aria-label="축소" $w={14}><svg width="8" height="8" viewBox="0 0 8 8" aria-hidden="true"><path d="M.5 .5h7v7h-7z" fill="#fff" stroke="#999" /><path d="M3 3h2v2H3z" fill="#4567b5" /></svg></ViewButton>
            <Divider $w={5} $h={0} />
            <ZoomSlider type="range" aria-label="확대 비율" min={0} max={100} defaultValue={54} />
            <ViewButton aria-label="확대" $w={22}><svg width="8" height="8" viewBox="0 0 8 8" aria-hidden="true"><path d="M.5 .5h7v7h-7z" fill="#cfdaf5" stroke="#6d86c6" /><path d="M2 2h4v4H2z" fill="#fff" /></svg></ViewButton>
            <ViewButton aria-label="돋보기" $w={14}><Line w={9} h={9} d="M6 3.500a2.500 2.500 0 1 1-5 0 2.500 2.500 0 0 1 5 0zM5.500 5.500l3 3" color="#777" /></ViewButton>
            <StatusItem $w={22} $line={false}>125%</StatusItem>
            <Divider $w={6} $h={0} />
            <Line w={7} h={10} d="M7 3L0 10M7 6l-4 4" color="#bbb" />
          </StatusBar>
        </Window>
      </Workspace>
      <Taskbar>
        <Pins $w={172} $n={6}>
          <Pin aria-label="시작"><svg width="10" height="10" viewBox="0 0 10 10" fill="#fff" aria-hidden="true"><path d="M0 1.400L4.600.8v4H0zM5.200.7L10 0v4.800H5.200zM0 5.300h4.600v4L0 8.700zM5.200 5.300H10V10l-4.800-.7z" /></svg></Pin>
          <Pin aria-label="검색"><Line w={10} h={10} d="M9 3.500a3 3 0 1 1-6 0 3 3 0 0 1 6 0zM4 6L.5 9.500" color="#e8eef4" /></Pin>
          <Pin aria-label="작업 보기"><Line w={11} h={10} d="M.5 0v1.500h6V0M.5 3.500h6v3h-6zM.5 10V8.500h6V10M9.500 0v10M8.500 4.500h2" color="#dfe7ef" /></Pin>
          <Pin aria-label="Microsoft Edge"><EdgeIcon size={15} /></Pin>
          <Pin aria-label="Chrome"><ChromeIcon size={14} /></Pin>
          <Pin aria-label="Internet Explorer"><IeIcon size={15} /></Pin>
        </Pins>
        <RunningApp><HwpIcon size={14} />빈 문서 1 - 한글</RunningApp>
        <Pins $w={224} $n={8}>
          <Pin aria-label="Excel"><ExcelIcon size={14} /></Pin>
          <Pin aria-label="PowerPoint"><PowerPointIcon size={14} /></Pin>
          <Pin aria-label="Word"><WordIcon size={14} /></Pin>
          <Pin aria-label="팟플레이어"><PotPlayerIcon size={14} /></Pin>
          <Pin aria-label="MP3Gain"><Mp3GainIcon size={14} /></Pin>
          <Pin aria-label="Winamp"><WinampIcon size={13} /></Pin>
          <Pin aria-label="파일찾기"><FinderIcon size={14} /></Pin>
          <Pin aria-label="Windows Down"><PowerIcon size={15} /></Pin>
        </Pins>
        <Pins $w={71} $n={5}>
          <Pin aria-label="입력기"><svg width="9" height="9" viewBox="0 0 9 9" aria-hidden="true"><path d="M0 0h9v9H0z" fill="#1690dc" /><path d="M1 1h3v3H1zM1 6h3M6.500 1v7M5 3h3" stroke="#fff" fill="#bfe4fa" /></svg></Pin>
          <Pin aria-label="장치"><svg width="9" height="8" viewBox="0 0 9 8" aria-hidden="true"><path d="M0 3l4-2 5 3-4 3z" fill="#6a7a3c" /><path d="M1 3l3-1 2 1.500L4 5z" fill="#c09a2e" /><path d="M5 6l3-2v1.500L5 7.500z" fill="#111" /></svg></Pin>
          <Pin aria-label="USB"><Line w={8} h={10} d="M2.500 2.500v-2h3v2M1.500 2.500h5v4h-5zM1.500 6.500v2l1 1h3l1-1v-2" color="#e4ebf2" /></Pin>
          <Pin aria-label="네트워크"><Line w={10} h={9} d="M1.500 1.500h8v5h-6M5 8.500h4M.5 .5v4h2v4M7 6.500v2" color="#e4ebf2" /></Pin>
          <Pin aria-label="소리"><Line w={10} h={9} d="M.5 3.500h1.500l2-2v6l-2-2H.5zM5.500 3c1 1 1 2 0 3M7 2c1.500 1.500 1.500 3.500 0 5M8.500 1c2 2 2 5 0 7" color="#e4ebf2" sw={0.8} /></Pin>
        </Pins>
        <Clock>오전 9:54<br />2021-09-11</Clock>
      </Taskbar>
    </Desktop>
  );
}
